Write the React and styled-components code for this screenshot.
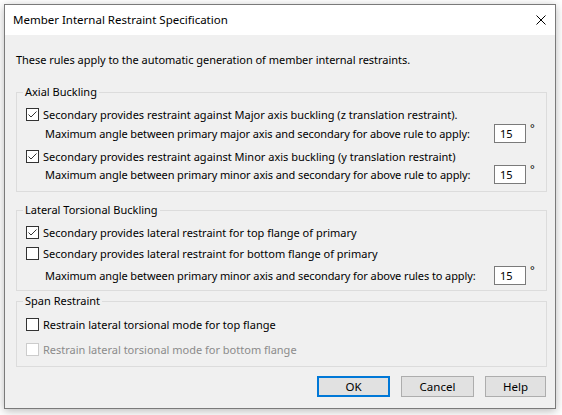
import React from 'react';
import styled, { createGlobalStyle } from 'styled-components';

/* 페이지 기본 스타일 */
const GlobalStyle = createGlobalStyle`
    body {
        margin: 0;
        background: #ffffff;
        font-family: "Noto Sans", "Open Sans", sans-serif;
        font-size: 11px;
        color: #000000;
    }
`;

/* 창 바깥 여백 */
const Screen = styled.div`
    padding: 4px 6px 6px 4px;
`;

/* 다이얼로그 창 */
const Window = styled.div`
    width: 552px;
    height: 405px;
    box-sizing: border-box;
    border: 1px solid #7a7a7a;
    background: #f0f0f0;
    box-shadow: 0 2px 9px rgba(0, 0, 0, 0.28);

    display: flex;
    flex-direction: column;
`;

/* 제목 표시줄 */
const TitleBar = styled.div`
    height: 30px;
    flex: 0 0 30px;
    background: #ffffff;
    padding-left: 8px;
    padding-right: 9px;

    display: flex;
    align-items: center;
    justify-content: space-between;
`;

const TitleText = styled.span`
    font-size: 11.5px;
    line-height: 16px;
`;

const CloseButton = styled.span`
    width: 10px;
    height: 10px;
    display: flex;
`;

/* 본문 */
const Body = styled.div`
    flex: 1;
    padding: 17px 8px 0 11px;
    white-space: nowrap;

    display: flex;
    flex-direction: column;
`;

const Intro = styled.p`
    margin: 0 0 16px 0;
    line-height: 16px;
    letter-spacing: -0.03px;
`;

/* 그룹 박스 */
const Group = styled.fieldset`
    margin: ${props => props.$gap}px 0 0 0;
    padding: ${props => props.$pt}px 8px ${props => props.$pb}px 9px;
    border: 1px solid #dcdcdc;
    min-inline-size: 0;
`;

const Legend = styled.legend`
    padding: 0 2px;
    margin-left: -3px;
    line-height: 16px;
`;

/* 체크박스 한 줄 */
const CheckRow = styled.label`
    height: 18px;
    margin-top: ${props => props.$mt || 0}px;

    display: flex;
    align-items: center;
    gap: 4px;

    color: ${props => (props.$disabled ? '#8b8b8b' : '#000000')};
`;

const Box = styled.span`
    width: 13px;
    height: 13px;
    box-sizing: border-box;
    flex: 0 0 13px;
    border: 1px solid ${props => (props.$disabled ? '#cccccc' : '#333333')};
    background: #ffffff;

    display: flex;
    align-items: center;
    justify-content: center;
`;

/* 각도 입력 줄 */
const AngleRow = styled.div`
    height: 19px;
    margin-top: ${props => props.$mt || 0}px;

    display: flex;
    align-items: center;
`;

const AngleLabel = styled.span`
    flex: 1;
    padding-left: 19px;
    letter-spacing: -0.1px;
`;

const AngleInput = styled.div`
    width: 32px;
    height: 19px;
    box-sizing: border-box;
    border: 1px solid #7a7a7a;
    background: #ffffff;
    padding-left: 5px;
    line-height: 17px;
`;

const Degree = styled.span`
    width: 12px;
    align-self: flex-start;
    margin-top: -2px;
    padding-left: 4px;
    box-sizing: border-box;
    font-size: 11px;
    line-height: 12px;
`;

/* 하단 버튼 */
const ButtonBar = styled.div`
    margin-top: 9px;
    padding-right: 1px;

    display: flex;
    justify-content: flex-end;
    gap: 11px;
`;

const Button = styled.button`
    width: ${props => props.$w}px;
    height: 21px;
    box-sizing: border-box;
    padding: 0;
    border: ${props => (props.$primary ? '2px solid #0078d7' : '1px solid #adadad')};
    background: #e1e1e1;

    font-family: inherit;
    font-size: 11.5px;
    color: #000000;
`;

const Check = ({ checked, disabled, children, mt }) => (
    <CheckRow $mt={mt} $disabled={disabled}>
        <Box $disabled={disabled}>
            {checked && (
                <svg width="11" height="11" viewBox="0 0 11 11">
                    <polyline points="1.5,5.5 4,8 9.5,2.5" fill="none" stroke="#333" strokeWidth="1" />
                </svg>
            )}
        </Box>
        <span>{children}</span>
    </CheckRow>
);

const Angle = ({ children, mt }) => (
    <AngleRow $mt={mt}>
        <AngleLabel>{children}</AngleLabel>
        <AngleInput>15</AngleInput>
        <Degree>°</Degree>
    </AngleRow>
);

const App = () => (
    <Screen>
        <GlobalStyle />
        <Window>
            <TitleBar>
                <TitleText>Member Internal Restraint Specification</TitleText>
                <CloseButton>
                    <svg width="10" height="10" viewBox="0 0 10 10">
                        <path d="M0.5 0.5 L9.5 9.5 M9.5 0.5 L0.5 9.5" stroke="#000" strokeWidth="1" />
                    </svg>
                </CloseButton>
            </TitleBar>
            <Body>
                <Intro>These rules apply to the automatic generation of member internal restraints.</Intro>

                <Group $gap={0} $pt={5} $pb={7}>
                    <Legend>Axial Buckling</Legend>
                    <Check checked>Secondary provides restraint against Major axis buckling (z translation restraint).</Check>
                    <Angle mt={1}>Maximum angle between primary major axis and secondary for above rule to apply:</Angle>
                    <Check checked mt={4}>Secondary provides restraint against Minor axis buckling (y translation restraint)</Check>
                    <Angle>Maximum angle between primary minor axis and secondary for above rule to apply:</Angle>
                </Group>

                <Group $gap={10} $pt={5} $pb={5}>
                    <Legend>Lateral Torsional Buckling</Legend>
                    <Check checked>Secondary provides lateral restraint for top flange of primary</Check>
                    <Check mt={3}>Secondary provides lateral restraint for bottom flange of primary</Check>
                    <Angle mt={4}>Maximum angle between primary minor axis and secondary for above rules to apply:</Angle>
                </Group>

                <Group $gap={2} $pt={6} $pb={8}>
                    <Legend>Span Restraint</Legend>
                    <Check>Restrain lateral torsional mode for top flange</Check>
                    <Check disabled mt={7}>Restrain lateral torsional mode for bottom flange</Check>
                </Group>

                <ButtonBar>
                    <Button $w={73} $primary>OK</Button>
                    <Button $w={73}>Cancel</Button>
                    <Button $w={61}>Help</Button>
                </ButtonBar>
            </Body>
        </Window>
    </Screen>
);

export default App;
